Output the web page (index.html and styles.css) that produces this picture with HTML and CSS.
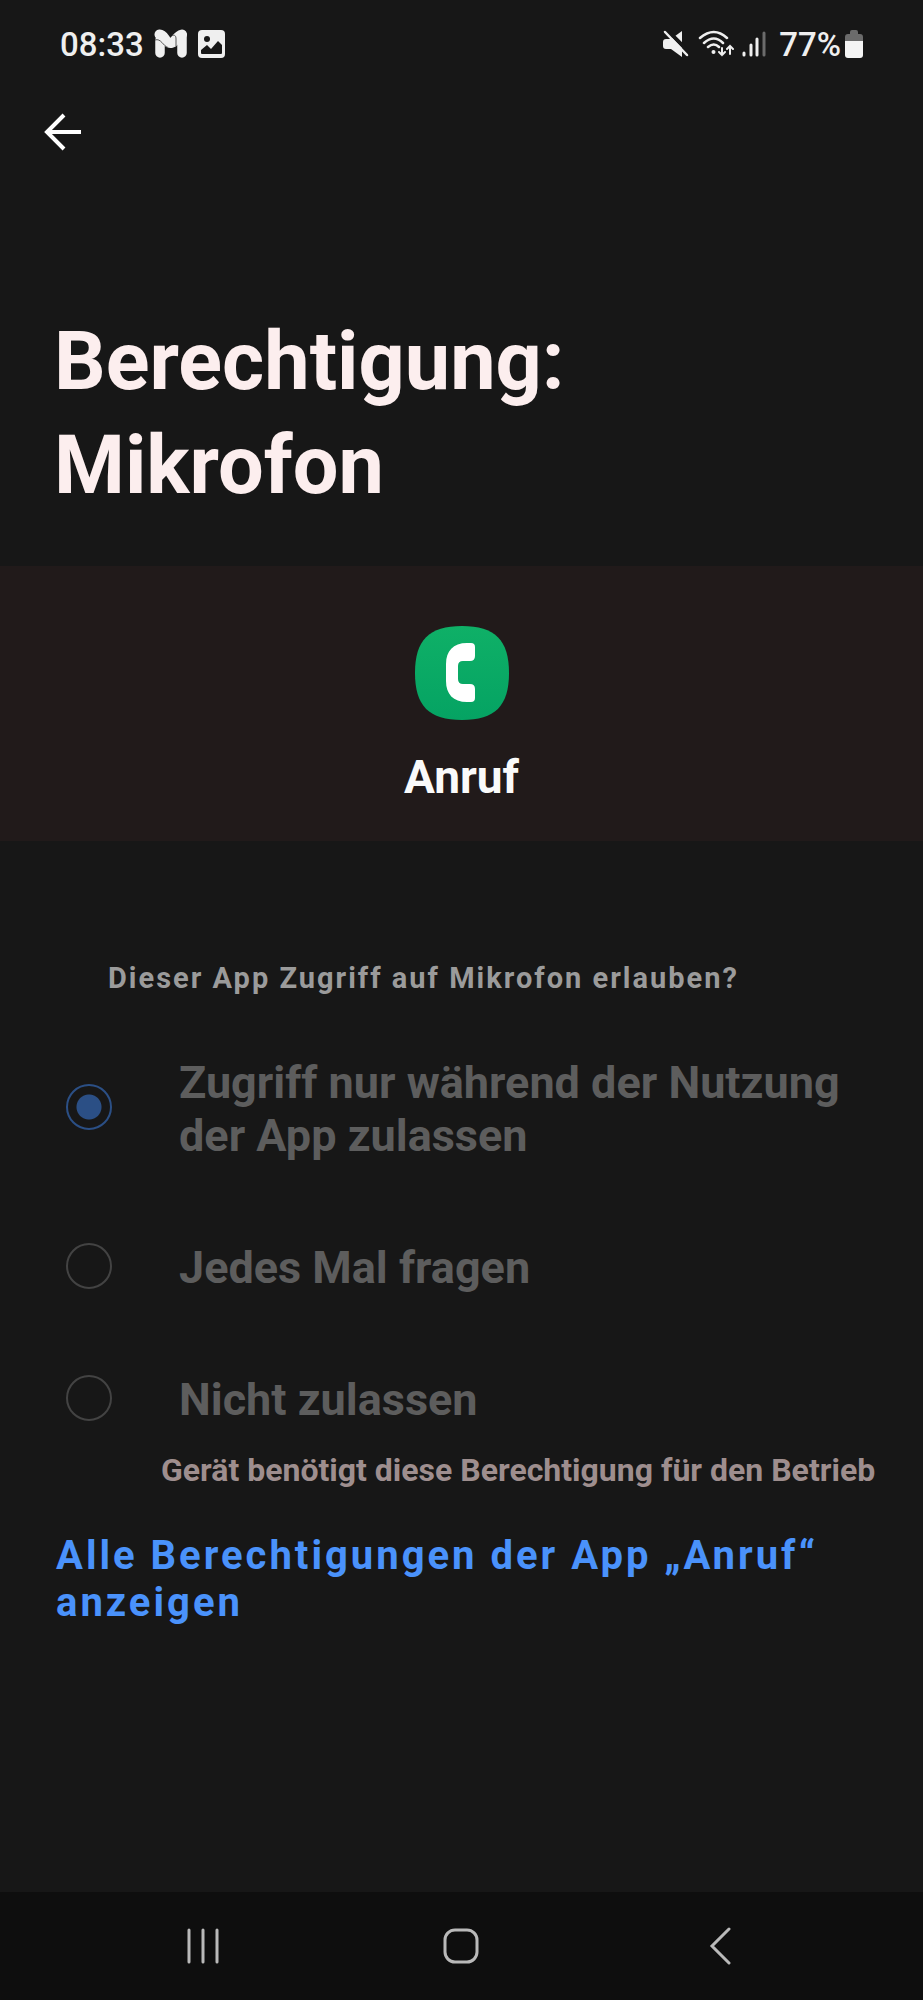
FILE: index.html
```
<!DOCTYPE html>
<html lang="de">

<head>
    <meta charset="UTF-8">
    <meta name="viewport" content="width=device-width, initial-scale=1.0">
    <title>Berechtigung: Mikrofon</title>
    <link rel="stylesheet" href="styles.css">
</head>

<body>

    <div class="status">
        <div class="status-left">
            <span class="clock">08:33</span>
            <svg class="icon-m" width="34" height="30" viewBox="0 0 34 30">
                <path d="M6 11v13M28 6v18" fill="none" stroke="#efefef" stroke-width="9.5" stroke-linecap="round" />
                <path d="M5.500 5.500C11 5 11 15 17 14C22 13 22 7 28 5.500" fill="none" stroke="#efefef" stroke-width="10" stroke-linecap="round" />
                <path d="M1 11C7 9 9 17 14 18.500M22 17V10C22 7 21 5.500 18 6.500" fill="none" stroke="#555" stroke-width="1" />
            </svg>
            <svg width="27" height="28" viewBox="0 0 27 28">
                <rect width="27" height="28" rx="4" fill="#efefef" />
                <circle cx="9" cy="9" r="3" fill="#171717" />
                <path d="M3 20l6-5 4 4 7-8 4 4v8q0 1-1 1H4q-1 0-1-1z" fill="#171717" />
            </svg>
        </div>
        <div class="status-right">
            <div class="signals">
                <svg width="28" height="28" viewBox="0 0 28 28">
                    <path d="M20 1v26L9 19H4q-3 0-3-3v-4q0-3 3-3h5z" fill="#efefef" />
                    <path d="M4-1L28 23" stroke="#171717" stroke-width="4" />
                    <path d="M3 2l22 23" stroke="#efefef" stroke-width="2.500" stroke-linecap="round" />
                </svg>
                <svg width="36" height="28" viewBox="0 0 36 28">
                    <g fill="none" stroke="#efefef" stroke-width="2.500" stroke-linecap="round">
                        <path d="M2 8Q16-4 29 8M6 13Q16 4 25 13M10 17q6-5 11 0" />
                        <path d="M24 18v7m-3-3l3 3 3-3M32 24v-8m-3 3l3-3 3 3" stroke-width="2" />
                    </g>
                    <circle cx="15.500" cy="22" r="2" fill="#efefef" />
                </svg>
                <svg width="25" height="26" viewBox="0 0 25 26">
                    <path d="M2 22v2M9 14v10M15 8v16" stroke="#efefef" stroke-width="3" stroke-linecap="round" />
                    <path d="M22 2v22" stroke="#6b6b6b" stroke-width="3" stroke-linecap="round" />
                </svg>
            </div>
            <span>77%</span>
            <svg width="18" height="28" viewBox="0 0 18 28">
                <path d="M0 12V7q0-3 3-3h2V2q0-2 2-2h4q2 0 2 2v2h2q3 0 3 3v5z" fill="#6b6b6b" />
                <path d="M0 11h18v14q0 3-3 3H3q-3 0-3-3z" fill="#f4f4f4" />
            </svg>
        </div>
    </div>

    <header class="toolbar">
        <button class="back" type="button" aria-label="Zurück">
            <svg width="38" height="38" viewBox="0 0 38 38">
                <path d="M37 19H4M20 2L3 19l17 17" fill="none" stroke="#fff" stroke-width="4" />
            </svg>
        </button>
    </header>

    <main>
        <h1 class="title">Berechtigung: Mikrofon</h1>

        <section class="app">
            <svg width="94" height="94" viewBox="0 0 94 94">
                <defs>
                    <linearGradient id="green" x1="0" y1="0" x2="0" y2="1">
                        <stop offset="0" stop-color="#0fb067" />
                        <stop offset="1" stop-color="#05a363" />
                    </linearGradient>
                </defs>
                <path d="M47 0C80 0 94 14 94 47S80 94 47 94 0 80 0 47 14 0 47 0z" fill="url(#green)" />
                <path d="M52 17h4q4 0 4 4v9q0 5-5 5h-7q-5 0-5 5v13q0 5 5 5h7q5 0 5 5v9q0 4-4 4h-4C38 76 31 68 31 55V38C31 25 38 17 52 17z" fill="#fff" />
            </svg>
            <h2 class="app-name">Anruf</h2>
        </section>

        <fieldset class="options">
            <legend class="question">Dieser App Zugriff auf Mikrofon erlauben?</legend>
            <label class="option">
                <input class="radio" type="radio" name="mic" checked disabled>
                <span>Zugriff nur während der Nutzung der App zulassen</span>
            </label>
            <label class="option">
                <input class="radio" type="radio" name="mic" disabled>
                <span>Jedes Mal fragen</span>
            </label>
            <label class="option">
                <input class="radio" type="radio" name="mic" disabled>
                <span>Nicht zulassen</span>
            </label>
        </fieldset>

        <p class="note">Gerät benötigt diese Berechtigung für den Betrieb</p>
        <a class="all" href="#">Alle Berechtigungen der App „Anruf“ anzeigen</a>
    </main>

    <nav class="navbar">
        <button type="button" aria-label="Letzte Apps">
            <svg width="34" height="38" viewBox="0 0 34 38">
                <path d="M3 3v32M17 3v32M31 3v32" stroke="#b9b9b9" stroke-width="3" stroke-linecap="round" />
            </svg>
        </button>
        <button type="button" aria-label="Startseite">
            <svg width="38" height="38" viewBox="0 0 38 38">
                <rect x="3" y="3" width="32" height="32" rx="10" fill="none" stroke="#b9b9b9" stroke-width="3" />
            </svg>
        </button>
        <button type="button" aria-label="Zurück">
            <svg width="24" height="38" viewBox="0 0 24 38">
                <path d="M21 2L4 19l17 17" fill="none" stroke="#b9b9b9" stroke-width="3" stroke-linecap="round" />
            </svg>
        </button>
    </nav>

</body>

</html>
```
FILE: styles.css
```
* {
    padding: 0;
    margin: 0;
    box-sizing: border-box;
}

body {
    display: flex;
    flex-direction: column;
    min-height: 100vh;
    background-color: #171717;
    color: #fff;
    font-family: Roboto, "Liberation Sans", sans-serif;
    font-weight: bold;
}

svg {
    display: block;
    flex-shrink: 0;
}

button {
    display: flex;
    align-items: center;
    justify-content: center;
    background: none;
    border: none;
    cursor: pointer;
}

/* status bar */
.status {
    display: flex;
    justify-content: space-between;
    align-items: center;
    height: 88px;
    padding: 0 60px;
    color: #efefef;
    font-size: 33px;
    font-weight: 500;
}

.status-left,
.status-right,
.signals {
    display: flex;
    align-items: center;
}

.status-left {
    gap: 10px;
}

.status-right {
    gap: 4px;
}

.signals {
    gap: 8px;
    margin-right: 8px;
}

.toolbar {
    height: 88px;
    padding: 0 44px;
    display: flex;
    align-items: center;
}

.title {
    padding: 134px 54px 48px;
    max-width: 760px;
    font-size: 81px;
    line-height: 104px;
    color: #fceeee;
}

.app {
    display: flex;
    flex-direction: column;
    align-items: center;
    gap: 30px;
    padding: 60px 0 37px;
    background-color: #211a1a;
}

.app-name {
    font-size: 46px;
    line-height: 54px;
    color: #fafafa;
}

/* permission choices */
.options {
    border: none;
    padding: 120px 66px 0;
}

.question {
    float: left;
    width: 100%;
    padding-left: 42px;
    margin-bottom: 22px;
    font-size: 29px;
    line-height: 34px;
    letter-spacing: 2px;
    color: #9b9b9b;
}

.option {
    clear: both;
    display: flex;
    align-items: center;
    gap: 67px;
    padding: 39px 0 40px;
    font-size: 45px;
    line-height: 53px;
    color: #5d5d5d;
}

.option:last-child {
    padding-bottom: 25px;
}

.radio {
    appearance: none;
    flex-shrink: 0;
    width: 46px;
    height: 46px;
    margin-bottom: 4px;
    border: 2px solid #434343;
    border-radius: 50%;
}

.radio:checked {
    border-color: #2b4f85;
    background: radial-gradient(circle, #2b4f85 12px, transparent 13px);
}

.note {
    padding: 0 40px 0 161px;
    font-size: 32px;
    line-height: 38px;
    color: #9e8e8e;
}

.all {
    display: block;
    margin: 43px 56px;
    font-size: 40px;
    line-height: 47px;
    letter-spacing: 3px;
    color: #4a92fb;
    text-decoration: none;
}

.navbar {
    display: flex;
    margin-top: auto;
    height: 108px;
    padding: 0 74px;
    background-color: #0e0e0e;
}

.navbar button {
    flex: 1;
}
```
